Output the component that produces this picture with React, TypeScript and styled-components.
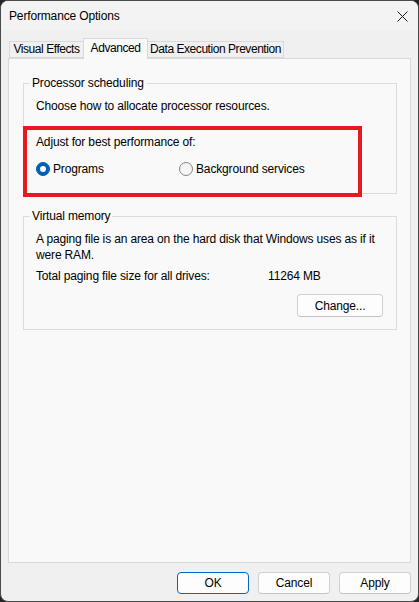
import React from "react";
import styled, { createGlobalStyle } from "styled-components";

const Global = createGlobalStyle`
  html, body { margin: 0; padding: 0; background: #262626; }
  body { font-family: "Liberation Sans", Arial, sans-serif; font-size: 12px; color: #000; letter-spacing: -0.15px; }
  * { box-sizing: border-box; }
`;

const Window = styled.div`
  width: 419px;
  height: 602px;
  border: 1px solid #4a4a4a;
  border-radius: 8px;
  background: #f0f0f0;
  overflow: hidden;
  display: flex;
  flex-direction: column;
`;

const TitleBar = styled.div`
  height: 29px;
  flex: none;
  background: #f3f3f3;
  display: flex;
  align-items: center;
  justify-content: space-between;
  padding: 0 9px 0 8px;
  font-size: 12px;
  line-height: 16px;
`;

const CloseButton = styled.div`
  width: 14px;
  height: 14px;
  display: flex;
  align-items: center;
  justify-content: center;
  margin-top: 1px;
`;

const TabStrip = styled.div`
  display: flex;
  align-items: flex-end;
  height: 21px;
  margin-top: 8px;
  margin-bottom: -1px;
  padding-left: 8px;
  position: relative;
  z-index: 1;
  flex: none;
`;

const Tab = styled.div<{ $active?: boolean; $w: number }>`
  display: flex;
  align-items: center;
  justify-content: center;
  width: ${(p) => p.$w}px;
  height: ${(p) => (p.$active ? "21px" : "17px")};
  margin: ${(p) => (p.$active ? "0 -1px 0 -1px" : "0 0 1px 0")};
  padding: ${(p) => (p.$active ? "0 0 2px" : "0")};
  border: 1px solid #d9d9d9;
  border-bottom: ${(p) => (p.$active ? "none" : "1px solid #d9d9d9")};
  background: ${(p) => (p.$active ? "#f9f9f9" : "#f0f0f0")};
  position: relative;
  z-index: ${(p) => (p.$active ? 2 : 1)};
  white-space: nowrap;
  line-height: 15px;
  letter-spacing: -0.45px;
`;

const Panel = styled.div`
  flex: 1;
  margin: 0 7px;
  background: #f9f9f9;
  border: 1px solid #d9d9d9;
  padding: 16px 13px 0 14px;
  position: relative;
  display: flex;
  flex-direction: column;
  gap: 14px;
`;

const Group = styled.fieldset`
  margin: 0;
  padding: 0;
  border: 1px solid #dcdcdc;
  min-inline-size: 0;
`;

const Legend = styled.legend`
  margin-left: 6px;
  padding: 0 2px;
  line-height: 16px;
`;

const GroupBody = styled.div<{ $pb: number }>`
  padding: 7px 13px ${(p) => p.$pb}px 12px;
  display: flex;
  flex-direction: column;
`;

const Line = styled.div<{ $mt?: number }>`
  line-height: 16px;
  margin-top: ${(p) => p.$mt ?? 0}px;
  white-space: nowrap;
`;

const RadioRow = styled.div`
  display: grid;
  grid-template-columns: 143px auto;
  margin-top: 11px;
  height: 16px;
`;

const RadioOption = styled.label`
  display: flex;
  align-items: center;
  gap: 3px;
  line-height: 16px;
`;

const RadioDot = styled.span<{ $checked?: boolean }>`
  width: 14px;
  height: 14px;
  border-radius: 50%;
  flex: none;
  display: flex;
  align-items: center;
  justify-content: center;
  background: ${(p) => (p.$checked ? "#005fb8" : "#f5f5f5")};
  border: 1px solid ${(p) => (p.$checked ? "#005fb8" : "#858585")};
  &::after {
    content: "";
    display: ${(p) => (p.$checked ? "block" : "none")};
    width: 6px;
    height: 6px;
    border-radius: 50%;
    background: #fff;
  }
`;

const InfoRow = styled.div`
  display: grid;
  grid-template-columns: 232px auto;
  line-height: 16px;
  margin-top: 5px;
`;

const ButtonRow = styled.div<{ $mt?: number }>`
  display: flex;
  justify-content: flex-end;
  gap: 9px;
  margin-top: ${(p) => p.$mt ?? 0}px;
`;

const Button = styled.button<{ $primary?: boolean; $w: number; $h: number }>`
  width: ${(p) => p.$w}px;
  height: ${(p) => p.$h}px;
  font-family: "Liberation Sans", Arial, sans-serif;
  font-size: 12px;
  letter-spacing: -0.15px;
  color: #000;
  background: #fdfdfd;
  border: 1px solid ${(p) => (p.$primary ? "#0067c0" : "#d0d0d0")};
  border-bottom-color: ${(p) => (p.$primary ? "#0067c0" : "#c4c4c4")};
  border-radius: 4px;
  padding: 0;
  line-height: 16px;
`;

const Footer = styled.div`
  flex: none;
  padding: 9px 7px 7px;
  display: flex;
  justify-content: flex-end;
  gap: 9px;
`;

const Highlight = styled.div`
  position: absolute;
  left: 14px;
  top: 67px;
  width: 339px;
  height: 71px;
  border: 4px solid #e6191f;
  pointer-events: none;
`;

export default function App() {
  return (
    <>
      <Global />
      <Window>
        <TitleBar>
          <span>Performance Options</span>
          <CloseButton>
            <svg width="11" height="11" viewBox="0 0 11 11">
              <path d="M0.5 0.5 L10.5 10.5 M10.5 0.5 L0.5 10.5" stroke="#1a1a1a" strokeWidth="1" fill="none" />
            </svg>
          </CloseButton>
        </TitleBar>
        <TabStrip>
          <Tab $w={75}>Visual Effects</Tab>
          <Tab $active $w={65}>Advanced</Tab>
          <Tab $w={137}>Data Execution Prevention</Tab>
        </TabStrip>
        <Panel>
          <Group>
            <Legend>Processor scheduling</Legend>
            <GroupBody $pb={16}>
              <Line>Choose how to allocate processor resources.</Line>
              <Line $mt={20}>Adjust for best performance of:</Line>
              <RadioRow>
                <RadioOption>
                  <RadioDot $checked />
                  Programs
                </RadioOption>
                <RadioOption>
                  <RadioDot />
                  Background services
                </RadioOption>
              </RadioRow>
            </GroupBody>
          </Group>
          <Group>
            <Legend>Virtual memory</Legend>
            <GroupBody $pb={12}>
              <Line>A paging file is an area on the hard disk that Windows uses as if it</Line>
              <Line>were RAM.</Line>
              <InfoRow>
                <span>Total paging file size for all drives:</span>
                <span>11264 MB</span>
              </InfoRow>
              <ButtonRow $mt={10}>
                <Button $w={86} $h={23}>Change...</Button>
              </ButtonRow>
            </GroupBody>
          </Group>
          <Highlight />
        </Panel>
        <Footer>
          <Button $primary $w={72} $h={22}>OK</Button>
          <Button $w={72} $h={22}>Cancel</Button>
          <Button $w={72} $h={22}>Apply</Button>
        </Footer>
      </Window>
    </>
  );
}
